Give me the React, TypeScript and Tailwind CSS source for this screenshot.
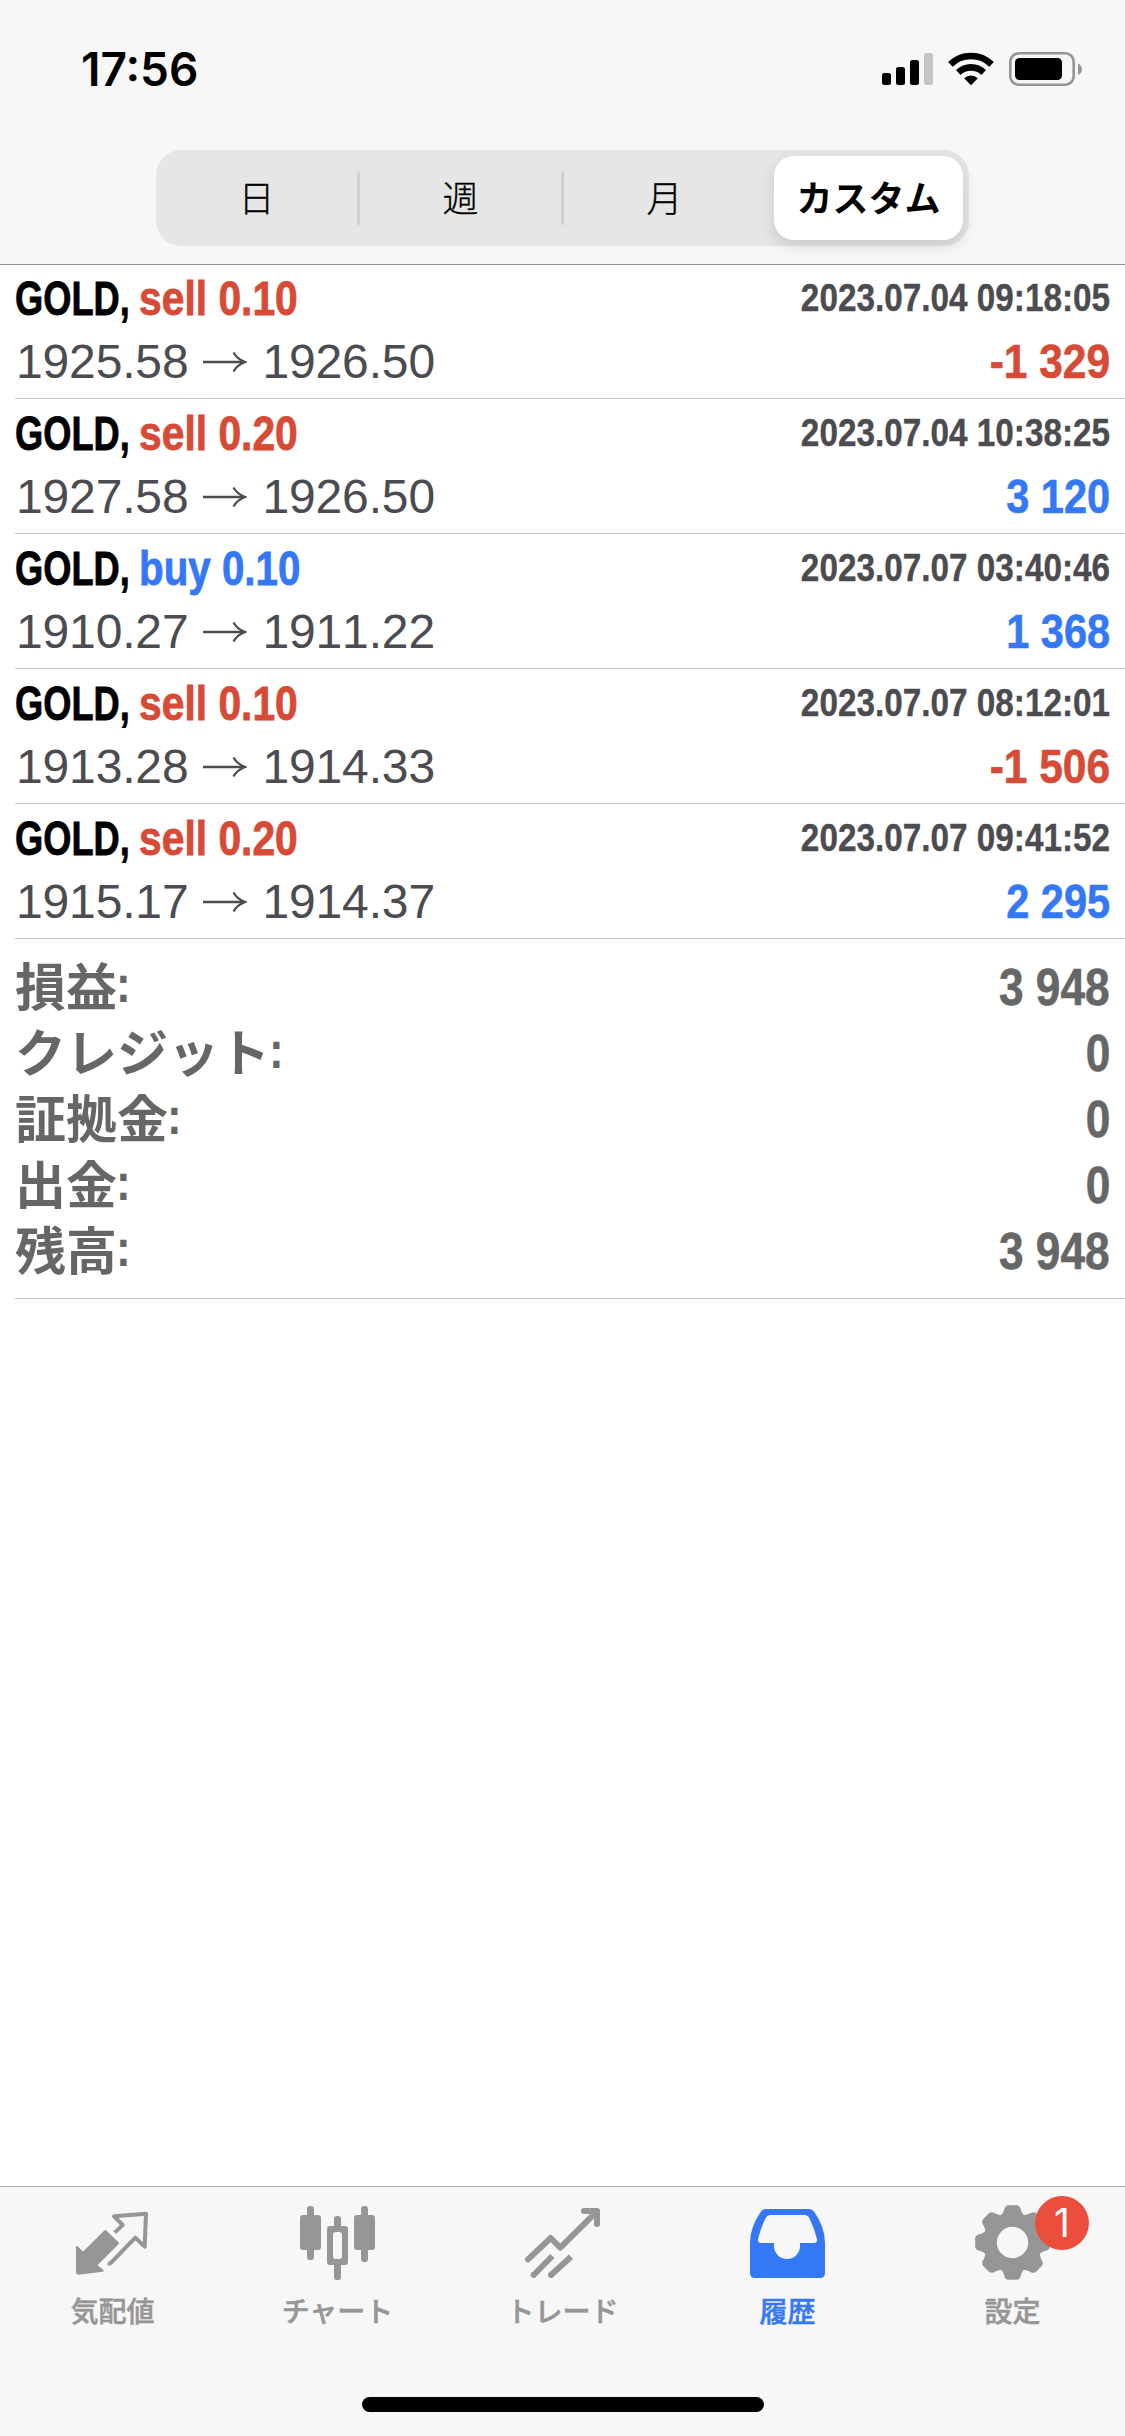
import React from 'react';

const LATIN = "font-['Liberation_Sans',Arial,sans-serif]";
const JP = "font-['Noto_Sans_CJK_JP',sans-serif]";

type Deal = {
    side: 'buy' | 'sell';
    volume: string;
    open: string;
    close: string;
    time: string;
    profit: string;
};

const deals: Deal[] = [
    { side: 'sell', volume: '0.10', open: '1925.58', close: '1926.50', time: '2023.07.04 09:18:05', profit: '-1 329' },
    { side: 'sell', volume: '0.20', open: '1927.58', close: '1926.50', time: '2023.07.04 10:38:25', profit: '3 120' },
    { side: 'buy', volume: '0.10', open: '1910.27', close: '1911.22', time: '2023.07.07 03:40:46', profit: '1 368' },
    { side: 'sell', volume: '0.10', open: '1913.28', close: '1914.33', time: '2023.07.07 08:12:01', profit: '-1 506' },
    { side: 'sell', volume: '0.20', open: '1915.17', close: '1914.37', time: '2023.07.07 09:41:52', profit: '2 295' },
];

const summary = [
    { label: '損益', value: '3 948' },
    { label: 'クレジット', value: '0' },
    { label: '証拠金', value: '0' },
    { label: '出金', value: '0' },
    { label: '残高', value: '3 948' },
];

const StatusBar = () => (
    <div className="flex h-[132px] items-start justify-between pl-[81px] pr-[42px]">
        <span className="mt-[41px] font-['Inter',sans-serif] text-[46px] font-semibold leading-[56px]">17:56</span>
        <div className="mt-[52px] flex items-start">
            <svg width="51" height="34" viewBox="0 0 51 34">
                <rect x="0" y="21" width="9" height="12" rx="2.5" />
                <rect x="14" y="15" width="9" height="18" rx="2.5" />
                <rect x="28" y="8" width="9" height="25" rx="2.5" />
                <rect x="42" y="1" width="9" height="32" rx="2.5" fill="#c5c5c5" />
            </svg>
            <svg className="ml-[15px]" width="46" height="34" viewBox="0 0 46 34">
                <g fill="none" stroke="#000" strokeWidth="6.6">
                    <path d="M2.4 12.4a29.5 29.5 0 0 1 41.2 0" />
                    <path d="M10.3 20.5a18.3 18.3 0 0 1 25.4 0" />
                </g>
                <path d="M23 33.2l-6.8-6.9a9.8 9.8 0 0 1 13.6 0z" />
            </svg>
            <svg className="ml-[15px]" width="74" height="34" viewBox="0 0 74 34">
                <rect x="1.3" y="1.3" width="63.4" height="31.4" rx="8.5" fill="none" stroke="#969696" strokeWidth="2.6" />
                <rect x="6" y="6" width="47" height="22" rx="4.5" />
                <path d="M69 11.5a6.2 6.2 0 0 1 0 11.5z" fill="#969696" />
            </svg>
        </div>
    </div>
);

const Periods = () => (
    <div className={`${JP} mx-auto mt-[18px] flex h-[96px] w-[813px] items-center rounded-[25px] bg-[#e6e6e6] text-[36px] leading-[54px]`}>
        <div className="w-[201px] pb-[4px] text-center font-light [-webkit-text-stroke:0.3px]">日</div>
        <div className="h-[54px] w-[3px] rounded bg-[#d0d0d0]" />
        <div className="w-[201px] pb-[4px] text-center font-light [-webkit-text-stroke:0.3px]">週</div>
        <div className="h-[54px] w-[3px] rounded bg-[#d0d0d0]" />
        <div className="w-[201px] pb-[4px] text-center font-light [-webkit-text-stroke:0.3px]">月</div>
        <div className="ml-auto mr-[6px] flex h-[84px] w-[189px] items-center justify-center rounded-[20px] bg-white pb-[5px] font-bold shadow-[0_6px_16px_rgba(0,0,0,0.13)]">
            カスタム
        </div>
    </div>
);

const Arrow = () => (
    <svg className="ml-[15px] mr-[15px]" width="44" height="22" viewBox="0 0 44 22" fill="none" stroke="#4b4b50">
        <path d="M0 11h41" strokeWidth="2.4" />
        <path d="M30.500 1.500Q34 8 42 11Q34 14 30.500 20.500" strokeWidth="2.2" />
    </svg>
);

const DealRow = ({ deal }: { deal: Deal }) => {
    const sideStyle = deal.side === 'buy' ? 'scale-x-[.84] text-[#3478f6]' : 'scale-x-[.85] text-[#d64a36]';
    const profitStyle = deal.profit.startsWith('-') ? 'scale-x-[.885] text-[#d64a36]' : 'scale-x-[.865] text-[#3478f6]';

    return (
        <div className={`${LATIN} ml-[15px] h-[135px] border-b border-[#c6c6c8] pr-[15px] [font-kerning:none]`}>
            <div className="flex h-[69px] items-start justify-between whitespace-nowrap text-[48px] font-bold leading-[56px]">
                <div className="flex pt-[7px] [-webkit-text-stroke:0.8px]">
                    <span className="w-[124px] origin-left scale-x-[.755]">GOLD,</span>
                    <span className={`origin-left ${sideStyle}`}>
                        {deal.side} {deal.volume}
                    </span>
                </div>
                <span className="origin-right scale-x-[.854] pt-[6px] text-[39px] text-[#4b4b50] [-webkit-text-stroke:0.4px]">{deal.time}</span>
            </div>
            <div className="flex items-center justify-between whitespace-nowrap pt-px text-[48px] leading-[56px]">
                <div className="flex items-center pl-px text-[#4b4b50]">
                    <span className="tracking-[-0.15px]">{deal.open}</span>
                    <Arrow />
                    <span className="tracking-[-0.15px]">{deal.close}</span>
                </div>
                <span className={`origin-right font-bold [-webkit-text-stroke:0.6px] ${profitStyle}`}>{deal.profit}</span>
            </div>
        </div>
    );
};

const Summary = () => (
    <div className="ml-[15px] h-[360px] border-b border-[#c6c6c8] pr-[15px] pt-[15px] text-[51px] font-bold text-[#666]">
        {summary.map((item) => (
            <div key={item.label} className="flex h-[66px] items-start justify-between whitespace-nowrap leading-[66px]">
                <div className="flex items-start">
                    <span className={`${JP} -mt-[3px]`}>{item.label}</span>
                    <span className={`${LATIN} -ml-px -mt-[2px] origin-left scale-x-[.86]`}>:</span>
                </div>
                <span className={`${LATIN} mt-px origin-right scale-x-[.867] [-webkit-text-stroke:0.6px]`}>{item.value}</span>
            </div>
        ))}
    </div>
);

const QuotesIcon = () => (
    <svg width="75" height="75" viewBox="225 105 225 225" fill="currentColor" stroke="currentColor" strokeLinejoin="round">
        <path d="M231 231l18 18 67-66 38 37-66 66 20 16-73 9q-4 0-4-4z" strokeWidth="6" />
        <path d="M344 188l24-23-26-26 96-8-4 99-28-27-75 77q-4 1-8 1" fill="none" strokeWidth="12" />
    </svg>
);

const ChartIcon = () => (
    <svg width="75" height="75" viewBox="900 105 225 225" fill="currentColor">
        <rect x="921" y="108" width="21" height="162" rx="10" />
        <rect x="900" y="135" width="63" height="105" rx="9" />
        <rect x="1002" y="138" width="21" height="40" rx="10" />
        <rect x="1002" y="275" width="21" height="55" rx="10" />
        <path fillRule="evenodd" d="M990 168h45q9 0 9 9v99q0 9-9 9h-45q-9 0-9-9v-99q0-9 9-9zm18 18q-9 0-9 9v63q0 9 9 9h9q9 0 9-9v-63q0-9-9-9z" />
        <rect x="1083" y="108" width="21" height="168" rx="10" />
        <rect x="1062" y="135" width="63" height="105" rx="9" />
    </svg>
);

const TradeIcon = () => (
    <svg width="75" height="75" viewBox="375 105 225 225" fill="none" stroke="currentColor" strokeWidth="18" strokeLinejoin="round">
        <path d="M384 268l68-64 29 29 109-108" strokeLinecap="round" />
        <path d="M552 123h39v39" strokeLinecap="round" />
        <path d="M457 258l-56 57M513 260l-60 55" />
        <circle cx="401" cy="315" r="9" fill="currentColor" stroke="none" />
        <circle cx="453" cy="315" r="9" fill="currentColor" stroke="none" />
    </svg>
);

const HistoryIcon = () => (
    <svg width="75" height="75" viewBox="75 105 225 225" fill="currentColor">
        <path
            fillRule="evenodd"
            d="M123 117h129q10 0 16 9q32 46 32 93v90q0 15-15 15H90q-15 0-15-15v-90q0-47 32-93q6-9 16-9zM137 135q-11 0-16 11q-15 31-22 62q-1 11 9 11h39v9a39 39 0 0 0 78 0v-9h42q10 0 9-11q-7-31-22-62q-5-11-16-11z"
        />
    </svg>
);

const GearIcon = () => (
    <svg width="75" height="75" viewBox="-112.500 -112.500 225 225" fill="currentColor">
        <path fillRule="evenodd" d="M0-88a88 88 0 1 1 0 176a88 88 0 1 1 0-176zM0-47a47 47 0 1 0 0 94a47 47 0 1 0 0-94z" />
        {[0, 45, 90, 135, 180, 225, 270, 315].map((deg) => (
            <path
                key={deg}
                transform={`rotate(${deg})`}
                d="M-30-77Q-24-84-20-94Q-18-106-12-106H12Q18-106 20-94Q24-84 30-77z"
                stroke="currentColor"
                strokeWidth="12"
                strokeLinejoin="round"
            />
        ))}
    </svg>
);

const tabs = [
    { label: '気配値', Icon: QuotesIcon },
    { label: 'チャート', Icon: ChartIcon },
    { label: 'トレード', Icon: TradeIcon },
    { label: '履歴', Icon: HistoryIcon, active: true },
    { label: '設定', Icon: GearIcon, badge: 1 },
];

const TabBar = () => (
    <nav className="flex h-[250px] flex-col border-t border-[#a9a9ab] bg-[#f7f7f7]">
        <div className="grid grid-cols-5">
            {tabs.map(({ label, Icon, active, badge }) => (
                <div key={label} className={`flex flex-col items-center pt-[18px] ${active ? 'text-[#3478f6]' : 'text-[#969696]'}`}>
                    <div className="relative">
                        <Icon />
                        {badge && (
                            <span className="absolute -top-[9px] left-[60px] flex size-[54px] items-center justify-center rounded-full bg-[#eb4e3d] pb-px font-['Inter',sans-serif] text-[39px] leading-none text-white">
                                {badge}
                            </span>
                        )}
                    </div>
                    <span className={`${JP} mt-[10px] text-[28px] font-medium leading-[40px] [-webkit-text-stroke:0.5px]`}>{label}</span>
                </div>
            ))}
        </div>
        <div className="mx-auto mb-[24px] mt-auto h-[15px] w-[402px] rounded-full bg-black" />
    </nav>
);

export default function App() {
    return (
        <div className="flex h-[2436px] w-[1125px] flex-col overflow-hidden bg-white text-black">
            <header className="h-[265px] border-b border-[#8e8e90] bg-[#f7f7f7]">
                <StatusBar />
                <Periods />
            </header>
            <main className="-mt-px flex-1">
                {deals.map((deal) => (
                    <DealRow key={deal.time} deal={deal} />
                ))}
                <Summary />
            </main>
            <TabBar />
        </div>
    );
}
